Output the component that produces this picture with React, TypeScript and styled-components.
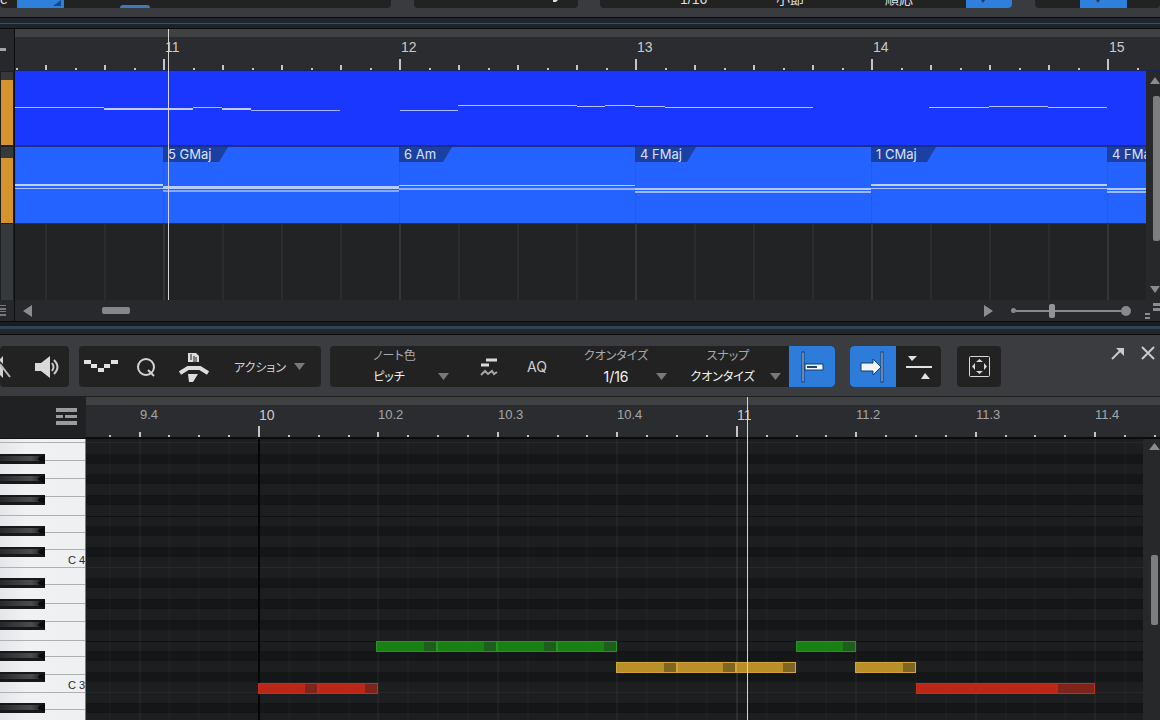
import React from "react";
import styled, { createGlobalStyle, css } from "styled-components";

const latin = `"Liberation Sans", "Noto Sans CJK JP", sans-serif`;

const GlobalStyle = createGlobalStyle`
  *, *::before, *::after { box-sizing: border-box; }
  body {
    margin: 0;
    background: #1c1d1f;
    color: #c6c8ca;
    font-family: ${latin};
    overflow: hidden;
  }
  button, select, input { font: inherit; color: inherit; margin: 0; }
  svg { display: block; }
`;

/* ---------- timeline data ---------- */

const BAR = 236;
const ARR_ORIGIN = 15;
const ARR_FIRST_BAR = 164;

const BEAT = 119.45;
const ROLL_ORIGIN = 86;
const ROLL_BAR_TEN = 259;
const beatX = (beat: number) => Math.round(ROLL_BAR_TEN + beat * BEAT) - ROLL_ORIGIN;

const arrangeBars = [11, 12, 13, 14, 15];
const rollBeats = [-1, 0, 1, 2, 3, 4, 5, 6, 7];
const beatName = (beat: number) => {
  const bar = 10 + Math.floor(beat / 4);
  const sub = ((beat % 4) + 4) % 4;
  return sub === 0 ? `${bar}` : `${bar}.${sub + 1}`;
};

type Line = [number, number, number, number, number];

const melody: Line[] = [
  [15, 104, 107, 1, 0.65], [104, 193, 108, 2, 0.75], [193, 222, 107, 1, 0.65],
  [222, 251, 108, 2, 0.75], [251, 340, 110, 1, 0.6], [400, 458, 110, 1, 0.65],
  [458, 577, 105, 1, 0.7], [577, 605, 106, 1, 0.7], [605, 635, 105, 1, 0.7],
  [635, 665, 106, 1, 0.7], [665, 813, 107, 1, 0.7], [929, 989, 107, 1, 0.7],
  [989, 1048, 106, 1, 0.7], [1048, 1107, 107, 1, 0.7],
];

interface Chord { name: string; tag: number; lines: [number, number, number][] }

const cLines: Chord["lines"] = [[37, 2, 0.7], [41, 1, 0.6]];
const fLines: Chord["lines"] = [[41, 2, 0.65], [44, 2, 0.55]];
const chords: Chord[] = [
  { name: "5 GMaj", tag: 65, lines: [[39, 3, 0.68], [43, 2, 0.45]] },
  { name: "6 Am", tag: 53, lines: [[38, 1, 0.65], [41, 2, 0.5]] },
  { name: "4 FMaj", tag: 61, lines: fLines },
  { name: "1 CMaj", tag: 65, lines: cLines },
  { name: "4 FMaj", tag: 61, lines: fLines },
];

type Tone = "green" | "gold" | "red";
const tones: Record<Tone, { fill: string; edge: string; end: string }> = {
  green: { fill: "#178212", edge: "#2a9027", end: "#1c5f1a" },
  gold: { fill: "#b88f28", edge: "#cda53c", end: "#7f6424" },
  red: { fill: "#bd2718", edge: "#c42c1e", end: "#7e241b" },
};

const notes: { x: number; w: number; row: number; tone: Tone; end: number }[] = [
  { x: 258, w: 60, row: 4, tone: "red", end: 12 },
  { x: 318, w: 60, row: 4, tone: "red", end: 12 },
  { x: 376, w: 61, row: 0, tone: "green", end: 12 },
  { x: 437, w: 60, row: 0, tone: "green", end: 12 },
  { x: 497, w: 60, row: 0, tone: "green", end: 12 },
  { x: 557, w: 60, row: 0, tone: "green", end: 12 },
  { x: 616, w: 61, row: 2, tone: "gold", end: 12 },
  { x: 677, w: 59, row: 2, tone: "gold", end: 12 },
  { x: 736, w: 60, row: 2, tone: "gold", end: 12 },
  { x: 796, w: 60, row: 0, tone: "green", end: 12 },
  { x: 855, w: 61, row: 2, tone: "gold", end: 12 },
  { x: 916, w: 179, row: 4, tone: "red", end: 36 },
];

/* ---------- shared pieces ---------- */

const Page = styled.main`
  display: flex;
  flex-direction: column;
  height: 100vh;
  overflow: hidden;
`;

const Divider = styled.div<{ $tall?: boolean }>`
  flex: none;
  height: ${(p) => (p.$tall ? 14 : 12)}px;
  border: solid #0b0c0d;
  border-width: 1px 0;
  background: ${(p) =>
    p.$tall
      ? "linear-gradient(#191b1f 0 4px, #2f4256 4px 7px, #20262a 7px)"
      : "linear-gradient(#20262c 0 5px, #3a5363 5px 6px, #1d2429 6px)"};
`;

const bare = css`
  appearance: none;
  border: 0;
  padding: 0;
  background: none;
`;

const Stack = styled.div`
  display: grid;
  flex: 1;
  min-width: 0;
  min-height: 0;
  overflow: hidden;
  position: relative;
  > * { grid-area: 1 / 1; min-width: 0; }
`;

const Playhead = styled.div<{ $x: number }>`
  position: absolute;
  z-index: 3;
  top: 0;
  bottom: 0;
  left: ${(p) => p.$x}px;
  width: 1px;
  background: #d4d5d6;
`;

const ScrollThumb = styled.div<{ $h: number; $inset?: number }>`
  width: 7px;
  height: ${(p) => p.$h}px;
  margin-right: ${(p) => p.$inset ?? 0}px;
  border-radius: 2px;
  background: #7d7e80;
`;

const ArrowButton = styled.button`
  ${bare}
  display: flex;
  color: #8b8c8e;
`;

const Tri = ({ dir, w = 11, h = 7 }: { dir: "up" | "down" | "left" | "right"; w?: number; h?: number }) => {
  const d = {
    up: `M0 ${h}L${w / 2} 0L${w} ${h}Z`,
    down: `M0 0L${w / 2} ${h}L${w} 0Z`,
    left: `M${w} 0L0 ${h / 2}L${w} ${h}Z`,
    right: `M0 0L${w} ${h / 2}L0 ${h}Z`,
  }[dir];
  return <svg width={w} height={h} fill="currentColor" aria-hidden="true"><path d={d} /></svg>;
};

/* ---------- clipped main toolbar ---------- */

const TopBar = styled.header`
  flex: none;
  display: flex;
  align-items: flex-start;
  height: 17px;
  overflow: hidden;
  background: #393b3e;
`;

const TopPanel = styled.div<{ $w?: number; $gap?: number }>`
  flex: ${(p) => (p.$w ? `0 0 ${p.$w}px` : "1")};
  margin-left: ${(p) => p.$gap ?? 0}px;
  display: flex;
  align-items: flex-end;
  height: 8px;
  overflow: hidden;
  border-radius: 0 0 4px 4px;
  background: #222223;
  color: #dcdddd;
  font-size: 14px;
  line-height: 18px;
`;

const TopButton = styled.button<{ $w: number; $gap: number }>`
  ${bare}
  flex: none;
  width: ${(p) => p.$w}px;
  margin-left: ${(p) => p.$gap}px;
  height: 8px;
  background: #2f7fdc;
  display: flex;
  justify-content: flex-end;
`;

const TopTab = styled.button`
  ${bare}
  width: 30px;
  height: 3px;
  margin-left: 56px;
  border-radius: 3px 3px 0 0;
  background: #3f79bd;
`;

const TopText = styled.span<{ $w: number; $gap: number }>`
  flex: none;
  width: ${(p) => p.$w}px;
  margin-left: ${(p) => p.$gap}px;
  white-space: nowrap;
`;

const Stem = () => (
  <svg width="31" height="8" aria-hidden="true"><path d="M0 0H4L2 3Z" fill="#1c3c66" /></svg>
);

/* ---------- arrangement ---------- */

const Arrange = styled.section`
  flex: none;
  display: grid;
  grid-template-columns: 15px minmax(0, 1fr);
  grid-template-rows: 42px 229px 21px;
  background: #28292b;
`;

const RailCell = styled.div<{ $bg?: string }>`
  display: flex;
  flex-direction: column;
  justify-content: center;
  border-right: 1px solid #0e0f10;
  background: ${(p) => p.$bg ?? "#26282b"};
`;

const Rail = styled.div`
  border-right: 1px solid #0e0f10;
  padding: 1px 1px 0;
  background: #1c1e1f;
  display: flex;
  flex-direction: column;
`;

const RailBlock = styled.div<{ $h: number; $on?: boolean; $gap?: number }>`
  height: ${(p) => p.$h}px;
  margin-bottom: ${(p) => p.$gap ?? 0}px;
  background: ${(p) => (p.$on ? "#d4932f" : "#36393b")};
`;

const Ruler = styled(Stack)`
  background: linear-gradient(#3f4143 0 8px, #2b2c2f 8px);
`;

const RulerLabels = styled.div<{ $lead: number; $top: number }>`
  display: flex;
  padding-left: ${(p) => p.$lead}px;
  padding-top: ${(p) => p.$top}px;
`;

const RulerLabel = styled.span<{ $minor?: boolean }>`
  flex: none;
  font-size: ${(p) => (p.$minor ? 13 : 14)}px;
  line-height: 18px;
  color: ${(p) => (p.$minor ? "#a5a6a9" : "#c9cacc")};
`;

const ArrangeBody = styled.div`
  display: flex;
  min-width: 0;
`;

const Lanes = styled.div`
  display: flex;
  flex-direction: column;
  min-width: 0;
`;

const MelodyLane = styled.div`
  height: 74px;
  background: #1a37ff;
`;

const ChordLane = styled.div`
  display: flex;
  height: 79px;
  border: solid #1b2f86;
  border-width: 2px 0 1px;
  background: #2463ff;
`;

const Clip = styled.div<{ $w: number }>`
  flex: 0 0 ${(p) => p.$w}px;
  display: grid;
  box-shadow: inset 1px 0 #225ce8;
  > * { grid-area: 1 / 1; min-width: 0; }
`;

const ChordTag = styled.span<{ $w: number }>`
  justify-self: start;
  width: ${(p) => p.$w}px;
  height: 15px;
  padding-left: 5px;
  background: #1b40a4;
  clip-path: polygon(0 0, 100% 0, calc(100% - 9px) 100%, 0 100%);
  color: #dbe2f6;
  font: 13px/14px Inter, "Liberation Sans", sans-serif;
  white-space: nowrap;
`;

const SideScroll = styled.div<{ $w: number; $top: number }>`
  flex: 0 0 ${(p) => p.$w}px;
  padding-top: ${(p) => p.$top}px;
  display: flex;
  flex-direction: column;
  align-items: flex-end;
  overflow: hidden;
  background: #27282a;
`;

const Gap = styled.div<{ $h?: number; $w?: number }>`
  flex: none;
  height: ${(p) => p.$h ?? 1}px;
  width: ${(p) => p.$w ?? 1}px;
`;

const BottomScroll = styled.div`
  display: flex;
  align-items: center;
  padding-left: 8px;
  background: #28292c;
`;

const HThumb = styled.div`
  width: 28px;
  height: 7px;
  margin: 0 auto 0 70px;
  border-radius: 2px;
  background: #858688;
`;

const Zoom = styled.label`
  display: flex;
  align-items: center;
  margin: 0 14px 0 18px;
`;

const Dot = styled.span<{ $d: number }>`
  width: ${(p) => p.$d}px;
  height: ${(p) => p.$d}px;
  border-radius: 50%;
  background: #88898b;
`;

const Range = styled.input`
  appearance: none;
  width: 105px;
  height: 14px;
  background: linear-gradient(#88898b, #88898b) center / 100% 2px no-repeat;
  &::-webkit-slider-thumb {
    appearance: none;
    width: 6px;
    height: 14px;
    border-radius: 2px;
    background: #929395;
  }
`;

const ArrangeTicks = () => (
  <svg width="100%" height="100%" fill="#c3c4c6" aria-hidden="true">
    {Array.from({ length: 80 }, (_, i) => {
      const step = i - 5;
      const x = Math.round(ARR_FIRST_BAR + (step * BAR) / 8) - ARR_ORIGIN;
      const bar = step % 8 === 0;
      const h = bar ? 11 : step % 2 === 0 ? 5 : 2;
      return <rect key={i} x={x - 1} y={41 - h} width="2" height={h} />;
    })}
    <rect y="41" width="100%" height="1" fill="#1b255c" />
  </svg>
);

const ArrangeGrid = () => (
  <svg width="100%" height="100%" aria-hidden="true">
    <rect width="100%" height="100%" fill="#222324" />
    {Array.from({ length: 40 }, (_, i) => {
      const step = i - 2;
      const x = Math.round(ARR_FIRST_BAR + (step * BAR) / 4) - ARR_ORIGIN;
      return <rect key={i} x={x - 1} y="0" width="2" height="100%" fill={step % 4 === 0 ? "#343536" : "#2b2c2d"} />;
    })}
  </svg>
);

const ClipLines = ({ lines }: { lines: Chord["lines"] }) => (
  <svg width="100%" height="76" fill="#fff" aria-hidden="true">
    {lines.map(([y, h, o]) => <rect key={y} y={y} width="100%" height={h} opacity={o} />)}
  </svg>
);

/* ---------- editor toolbar ---------- */

const Toolbar = styled.div`
  flex: none;
  display: flex;
  height: 62px;
  padding-top: 11px;
  border-bottom: 1px solid #1d1f20;
  background: #3a3c3f;
  font-feature-settings: "palt";
`;

const Group = styled.div<{ $w: number; $gap?: number }>`
  flex: 0 0 ${(p) => p.$w}px;
  display: flex;
  height: 41px;
  margin-left: ${(p) => p.$gap ?? 0}px;
  border-radius: 4px;
  overflow: hidden;
  background: #222223;
`;

const Tool = styled.button<{ $w: number; $on?: "left" | "right" }>`
  ${bare}
  flex: 0 0 ${(p) => p.$w}px;
  display: flex;
  align-items: center;
  justify-content: center;
  gap: 8px;
  color: #cfd0d1;
  font-size: 12px;
  ${(p) => p.$on && css`
    background: #2d7cd9;
    border-radius: ${p.$on === "left" ? "4px 0 0 4px" : "0 4px 4px 0"};
  `}
`;

const AqTool = styled(Tool)`
  font-family: Inter, "Liberation Sans", sans-serif;
  font-size: 14px;
`;

const Caret = styled.span`
  display: flex;
  color: #78797a;
`;

const Field = styled.label<{ $w: number }>`
  flex: 0 0 ${(p) => p.$w}px;
  display: grid;
  grid-template-columns: 1fr 11px;
  grid-template-rows: 20px 21px;
  align-items: center;
  text-align: center;
  color: #a9aaab;
  font-size: 12px;
  line-height: 20px;
`;

const FieldTitle = styled.span<{ $span?: boolean }>`
  grid-column: 1 / ${(p) => (p.$span ? 3 : 2)};
`;

const Select = styled.select<{ $digits?: boolean }>`
  ${bare}
  grid-column: 1;
  width: 100%;
  height: 20px;
  color: #f4f4f4;
  font-size: ${(p) => (p.$digits ? 14 : 12)}px;
  font-family: ${(p) => (p.$digits ? `Inter, ${latin}` : latin)};
  line-height: 20px;
  font-feature-settings: "palt";
  text-align: center;
  text-align-last: center;
  outline: none;
`;

const WindowTools = styled.div`
  display: flex;
  align-items: flex-start;
  gap: 15px;
  margin-left: auto;
  padding-right: 5px;
`;

const PickField = ({ w, title, value, span, digits }: {
  w: number; title: string; value: string; span?: boolean; digits?: boolean;
}) => (
  <Field $w={w}>
    <FieldTitle $span={span}>{title}</FieldTitle>
    <Select $digits={digits} defaultValue={value}><option>{value}</option></Select>
    <Caret><Tri dir="down" w={11} h={7} /></Caret>
  </Field>
);

/* ---------- piano roll ---------- */

const Editor = styled.section`
  flex: 1;
  display: grid;
  grid-template-columns: 86px minmax(0, 1fr);
  grid-template-rows: 42px minmax(0, 1fr);
  min-height: 0;
  position: relative;
`;

const Corner = styled.div`
  display: flex;
  align-items: center;
  justify-content: flex-end;
  padding: 0 9px 2px 0;
  background: #202122;
  border-bottom: 1px solid #101112;
`;

const RollBody = styled.div`
  display: flex;
  min-width: 0;
  min-height: 0;
`;

const Note = styled.div<{ $tone: Tone }>`
  position: absolute;
  display: flex;
  justify-content: flex-end;
  height: 11px;
  border: 1px solid ${(p) => tones[p.$tone].edge};
  background: ${(p) => tones[p.$tone].fill};
`;

const NoteEnd = styled.span<{ $tone: Tone; $w: number }>`
  width: ${(p) => p.$w}px;
  background: ${(p) => tones[p.$tone].end};
`;

const ROLL_TOP = 439;
const ROW = 10.4;
const C3_BOTTOM = 692.7 - ROLL_TOP;
const blackSteps = [1, 3, 6, 8, 10];
const semitones = Array.from({ length: 80 }, (_, i) => i - 50);
const inOctave = (n: number) => ((n % 12) + 12) % 12;
const whiteEdges = [0, 17.7, 35.3, 52, 71, 88.7, 107.3];
const octaves = [-4, -3, -2, -1, 0, 1, 2];
const namedOctaves = [0, 1];

const Keyboard = () => (
  <svg width="86" height="100%" role="img" aria-label="Piano keys">
    <defs>
      <linearGradient id="keySheen" x1="0" x2="1" y1="0" y2="0">
        <stop offset="0" stopColor="#26282a" />
        <stop offset=".8" stopColor="#4b4e50" />
        <stop offset="1" stopColor="#2b2d2f" />
      </linearGradient>
      <linearGradient id="bed" x1="0" x2="1" y1="0" y2="0">
        <stop offset="0" stopColor="#e4e6e9" />
        <stop offset=".3" stopColor="#f0f1f3" />
        <stop offset="1" stopColor="#eff0f2" />
      </linearGradient>
    </defs>
    <rect width="85" height="100%" fill="url(#bed)" />
    {octaves.map((o) =>
      whiteEdges.map((e) => (
        <rect key={`${o}:${e}`} x="0" y={Math.round(C3_BOTTOM - o * 12 * ROW - e) - 1} width="85" height="1" fill="#aeb0b3" />
      ))
    )}
    {semitones.filter((n) => blackSteps.includes(inOctave(n))).map((n) => {
      const y = Math.round(C3_BOTTOM - (n + 1) * ROW);
      return (
        <g key={n} transform={`translate(0 ${y})`}>
          <rect width="45" height="10" fill="#17181a" />
          <rect y="2" width="39" height="5" fill="url(#keySheen)" />
          <path d="M45 1L37 5L45 9Z" fill="#0b0c0d" />
        </g>
      );
    })}
    {namedOctaves.map((o) => (
      <text key={o} x="68" y={Math.round(C3_BOTTOM - o * 12 * ROW) - 4} fontSize="11" fill="#2a2b2d">{`C ${o + 3}`}</text>
    ))}
    <rect x="85" width="1" height="100%" fill="#7a7c7f" />
  </svg>
);

const RollTicks = () => (
  <svg width="100%" height="100%" fill="#c3c4c6" aria-hidden="true">
    {Array.from({ length: 64 }, (_, i) => {
      const step = i - 5;
      const h = step % 16 === 0 ? 11 : step % 4 === 0 ? 5 : 2;
      return <rect key={i} x={beatX(step / 4) - 1} y={40 - h} width="2" height={h} />;
    })}
    <rect y="40" width="100%" height="2" fill="#0b0c0d" />
  </svg>
);

const RollGrid = () => (
  <svg width="100%" height="100%" aria-hidden="true">
    <rect width="100%" height="100%" fill="#1d1e20" />
    {semitones.filter((n) => blackSteps.includes(inOctave(n))).map((n) => (
      <rect key={n} y={Math.round(C3_BOTTOM - (n + 1) * ROW)} width="100%" height="10" fill="#151618" />
    ))}
    {octaves.map((o) => (
      <g key={o}>
        <rect y={Math.round(C3_BOTTOM - o * 12 * ROW) - 1} width="100%" height="1" fill="#27282a" />
        <rect y={Math.round(C3_BOTTOM - (o * 12 + 5) * ROW)} width="100%" height="1" fill="#101112" />
      </g>
    ))}
    {Array.from({ length: 64 }, (_, i) => {
      const step = i - 5;
      return (
        <rect key={i} x={beatX(step / 4) - 1} width="2" height="100%" fill="#fff"
          opacity={step % 16 === 0 ? 0.08 : step % 4 === 0 ? 0.035 : 0.015} />
      );
    })}
    <rect x={beatX(0) - 1} width="2" height="100%" fill="#050505" />
  </svg>
);

export default function App() {
  return (
    <>
      <GlobalStyle />
      <Page>
        <TopBar>
          <TopPanel $w={391}>
            <TopText $w={7} $gap={0}>e</TopText>
            <TopButton $w={47} $gap={10} aria-label="Tool">
              <svg width="13" height="8" aria-hidden="true"><path d="M10 0V6H2Z" fill="#174a86" /></svg>
            </TopButton>
            <TopTab aria-label="Tab" />
          </TopPanel>
          <TopPanel $w={164} $gap={23}>
            <svg width="164" height="8" aria-hidden="true"><path d="M139 0H144L142 2H139Z" fill="#dcdddd" /></svg>
          </TopPanel>
          <TopPanel $w={412} $gap={22}>
            <TopText $w={30} $gap={80}>1/16</TopText>
            <TopText $w={30} $gap={66}>小節</TopText>
            <TopText $w={30} $gap={79}>順応</TopText>
            <TopButton $w={46} $gap={51} aria-label="Snap"><Stem /></TopButton>
          </TopPanel>
          <TopPanel $gap={23}>
            <TopButton $w={47} $gap={45} aria-label="Autoscroll"><Stem /></TopButton>
          </TopPanel>
        </TopBar>
        <Divider />

        <Arrange>
          <RailCell>
            <svg width="6" height="4" aria-hidden="true"><rect width="6" height="3" fill="#a3a4a6" /></svg>
          </RailCell>
          <Ruler>
            <ArrangeTicks />
            <RulerLabels $lead={ARR_FIRST_BAR - ARR_ORIGIN + 1} $top={9}>
              {arrangeBars.map((b) => (
                <RulerLabel key={b} style={{ width: BAR }}>{b}</RulerLabel>
              ))}
            </RulerLabels>
            <Playhead $x={153} />
          </Ruler>

          <Rail>
            <RailBlock $h={8} />
            <RailBlock $h={65} $on $gap={2} />
            <RailBlock $h={11} />
            <RailBlock $h={65} $on $gap={1} />
            <RailBlock $h={76} />
          </Rail>
          <ArrangeBody>
            <Stack>
              <ArrangeGrid />
              <Lanes>
                <MelodyLane>
                  <svg width="100%" height="74" fill="#fff" role="img" aria-label="Melody">
                    {melody.map(([a, b, y, h, o]) => (
                      <rect key={a} x={a - ARR_ORIGIN} y={y - 71} width={b - a} height={h} opacity={o} />
                    ))}
                  </svg>
                </MelodyLane>
                <ChordLane>
                  <Clip $w={148}><ClipLines lines={cLines} /></Clip>
                  {chords.map((c, i) => (
                    <Clip key={i} $w={BAR}>
                      <ClipLines lines={c.lines} />
                      <ChordTag $w={c.tag}>{c.name}</ChordTag>
                    </Clip>
                  ))}
                </ChordLane>
              </Lanes>
              <Playhead $x={153} />
            </Stack>
            <SideScroll $w={14} $top={6}>
              <ArrowButton aria-label="Scroll up"><Tri dir="up" w={10} h={7} /></ArrowButton>
              <Gap $h={12} />
              <ScrollThumb $h={145} />
              <Gap $h={45} />
              <ArrowButton aria-label="Scroll down"><Tri dir="down" w={10} h={7} /></ArrowButton>
            </SideScroll>
          </ArrangeBody>

          <RailCell>
            <svg width="6" height="11" fill="#77787a" aria-hidden="true">
              <rect width="6" height="1" /><rect y="3" width="6" height="2" />
              <rect y="6" width="6" height="1" /><rect y="9" width="6" height="2" />
            </svg>
          </RailCell>
          <BottomScroll>
            <ArrowButton aria-label="Scroll left"><Tri dir="left" w={9} h={12} /></ArrowButton>
            <HThumb />
            <ArrowButton aria-label="Scroll right"><Tri dir="right" w={9} h={12} /></ArrowButton>
            <Zoom>
              <Dot $d={5} />
              <Range type="range" min={0} max={100} defaultValue={33} aria-label="Zoom" />
              <Dot $d={10} />
            </Zoom>
            <svg width="15" height="18" fill="#8b8c8e" aria-hidden="true">
              <rect x="8" y="1" width="7" height="3" /><rect x="8" y="6" width="7" height="3" />
              <rect x="0" y="11" width="5" height="2" /><rect x="0" y="15" width="5" height="2" />
            </svg>
          </BottomScroll>
        </Arrange>
        <Divider $tall />

        <Toolbar>
          <Group $w={69}>
            <Tool $w={25} aria-label="Mute">
              <svg width="25" height="30" aria-hidden="true">
                <path d="M0 7L3 4V12L0 9ZM0 12L3 16V26L0 23Z" fill="#d0d1d2" />
                <path d="M0 12L10 25" stroke="#b8b9ba" strokeWidth="2" />
              </svg>
            </Tool>
            <Tool $w={44} aria-label="Listen">
              <svg width="25" height="26" aria-hidden="true">
                <path d="M0 9H6L15 2V24L6 17H0Z" fill="#d8d9da" />
                <path d="M17 9Q20 13 17 17M19 6Q26 13 19 20" stroke="#c8c9ca" strokeWidth="2" fill="none" />
              </svg>
            </Tool>
          </Group>

          <Group $w={242} $gap={10}>
            <Tool $w={43} aria-label="Steps">
              <svg width="34" height="13" fill="#e0e1e1" aria-hidden="true">
                <rect y="0" width="7" height="4" /><rect x="7" y="4" width="6" height="4" />
                <rect x="14" y="8" width="6" height="4" /><rect x="20" y="4" width="6" height="4" />
                <rect x="27" y="0" width="7" height="4" />
              </svg>
            </Tool>
            <Tool $w={48} aria-label="Quantize">
              <svg width="20" height="20" fill="none" stroke="#d3d4d5" strokeWidth="2" aria-hidden="true">
                <ellipse cx="10" cy="10" rx="8" ry="8" /><path d="M12 13L18 19" />
              </svg>
            </Tool>
            <Tool $w={48} aria-label="Note actions">
              <svg width="30" height="32" aria-hidden="true">
                <path d="M9 11V2H17L20 5V11Z" fill="#dcdddd" />
                <path d="M12 3V9M15 5V11M17 6V11" stroke="#222223" strokeWidth="1" />
                <path d="M1 22L9 17H21L29 22" stroke="#dcdddd" strokeWidth="4" fill="none" />
                <path d="M9 23H19L14 31H10Z" fill="#dcdddd" />
              </svg>
            </Tool>
            <Tool $w={103}>
              <span>アクション</span>
              <Caret><Tri dir="down" w={11} h={7} /></Caret>
            </Tool>
          </Group>

          <Group $w={505} $gap={9}>
            <Gap $w={10} />
            <PickField w={109} title="ノート色" value="ピッチ" span />
            <Gap $w={4} />
            <Tool $w={72} aria-label="Note curves">
              <svg width="18" height="20" aria-hidden="true">
                <path d="M6 3H17M1 8H9" stroke="#d8d9da" strokeWidth="3" />
                <path d="M1 18L5 14L8 17L12 14L14 17L17 15" stroke="#a4a5a6" strokeWidth="2" fill="none" />
              </svg>
            </Tool>
            <AqTool $w={24}>AQ</AqTool>
            <Gap $w={27} />
            <PickField w={91} title="クオンタイズ" value="1/16" digits />
            <Gap $w={8} />
            <PickField w={106} title="スナップ" value="クオンタイズ" span />
            <Gap $w={8} />
            <Tool $w={46} $on="right" aria-label="Snap to start">
              <svg width="24" height="34" aria-hidden="true">
                <rect x="2" y="2" width="2" height="30" fill="#b9d2ef" stroke="#143c70" strokeWidth="1" />
                <rect x="5" y="14" width="18" height="6" fill="#f2f5f9" stroke="#143c70" strokeWidth="1" />
                <rect x="7" y="16" width="10" height="2" fill="#174a86" />
              </svg>
            </Tool>
          </Group>

          <Group $w={91} $gap={15}>
            <Tool $w={46} $on="left" aria-label="Autoscroll">
              <svg width="26" height="34" aria-hidden="true">
                <rect x="21" y="2" width="2" height="30" fill="#b9d2ef" stroke="#143c70" strokeWidth="1" />
                <path d="M1 13H13V9L21 17L13 25V21H1Z" fill="#f2f5f9" stroke="#143c70" strokeWidth="1" />
              </svg>
            </Tool>
            <Tool $w={45} aria-label="Align">
              <svg width="26" height="26" fill="#e0e1e1" aria-hidden="true">
                <path d="M2 2H11L6 7Z" /><rect y="12" width="26" height="2" /><path d="M15 25H24L19 19Z" />
              </svg>
            </Tool>
          </Group>

          <Group $w={44} $gap={16}>
            <Tool $w={44} aria-label="Fit to window">
              <svg width="21" height="21" fill="#d8d9da" aria-hidden="true">
                <rect x=".5" y=".5" width="20" height="20" rx="1" fill="none" stroke="#d8d9da" strokeWidth="1" />
                <path d="M7 6L10.500 3L14 6ZM7 15L10.500 18L14 15ZM6 7L3 10.500L6 14ZM15 7L18 10.500L15 14Z" />
              </svg>
            </Tool>
          </Group>

          <WindowTools>
            <ArrowButton aria-label="Detach">
              <svg width="14" height="14" aria-hidden="true">
                <path d="M1 13L10 4" stroke="#c9cacb" strokeWidth="2" /><path d="M5 2H13V10Z" fill="#c9cacb" />
              </svg>
            </ArrowButton>
            <ArrowButton aria-label="Close">
              <svg width="15" height="14" stroke="#c9cacb" strokeWidth="2" aria-hidden="true">
                <path d="M2 1L14 13M14 1L2 13" />
              </svg>
            </ArrowButton>
          </WindowTools>
        </Toolbar>

        <Editor>
          <Corner>
            <svg width="21" height="17" fill="#9b9c9d" aria-hidden="true">
              <rect width="21" height="4" /><rect y="7" width="7" height="3" />
              <rect x="9" y="7" width="12" height="3" /><rect y="13" width="21" height="4" />
            </svg>
          </Corner>
          <Ruler>
            <RollTicks />
            <RulerLabels $lead={beatX(-1)} $top={9}>
              {rollBeats.map((b) => (
                <RulerLabel key={b} $minor={b % 4 !== 0} style={{ width: beatX(b + 1) - beatX(b) }}>
                  {beatName(b)}
                </RulerLabel>
              ))}
            </RulerLabels>
          </Ruler>
          <Keyboard />
          <RollBody>
            <Stack>
              <RollGrid />
              {notes.map((n) => (
                <Note key={n.x} $tone={n.tone}
                  style={{ left: n.x - ROLL_ORIGIN, width: n.w, top: Math.round(202 + n.row * ROW) }}>
                  <NoteEnd $tone={n.tone} $w={n.end} />
                </Note>
              ))}
            </Stack>
            <SideScroll $w={17} $top={4}>
              <ArrowButton aria-label="Scroll up"><Tri dir="up" w={11} h={7} /></ArrowButton>
              <Gap $h={105} />
              <ScrollThumb $h={70} $inset={2} />
            </SideScroll>
          </RollBody>
          <Playhead $x={747} />
        </Editor>
      </Page>
    </>
  );
}
